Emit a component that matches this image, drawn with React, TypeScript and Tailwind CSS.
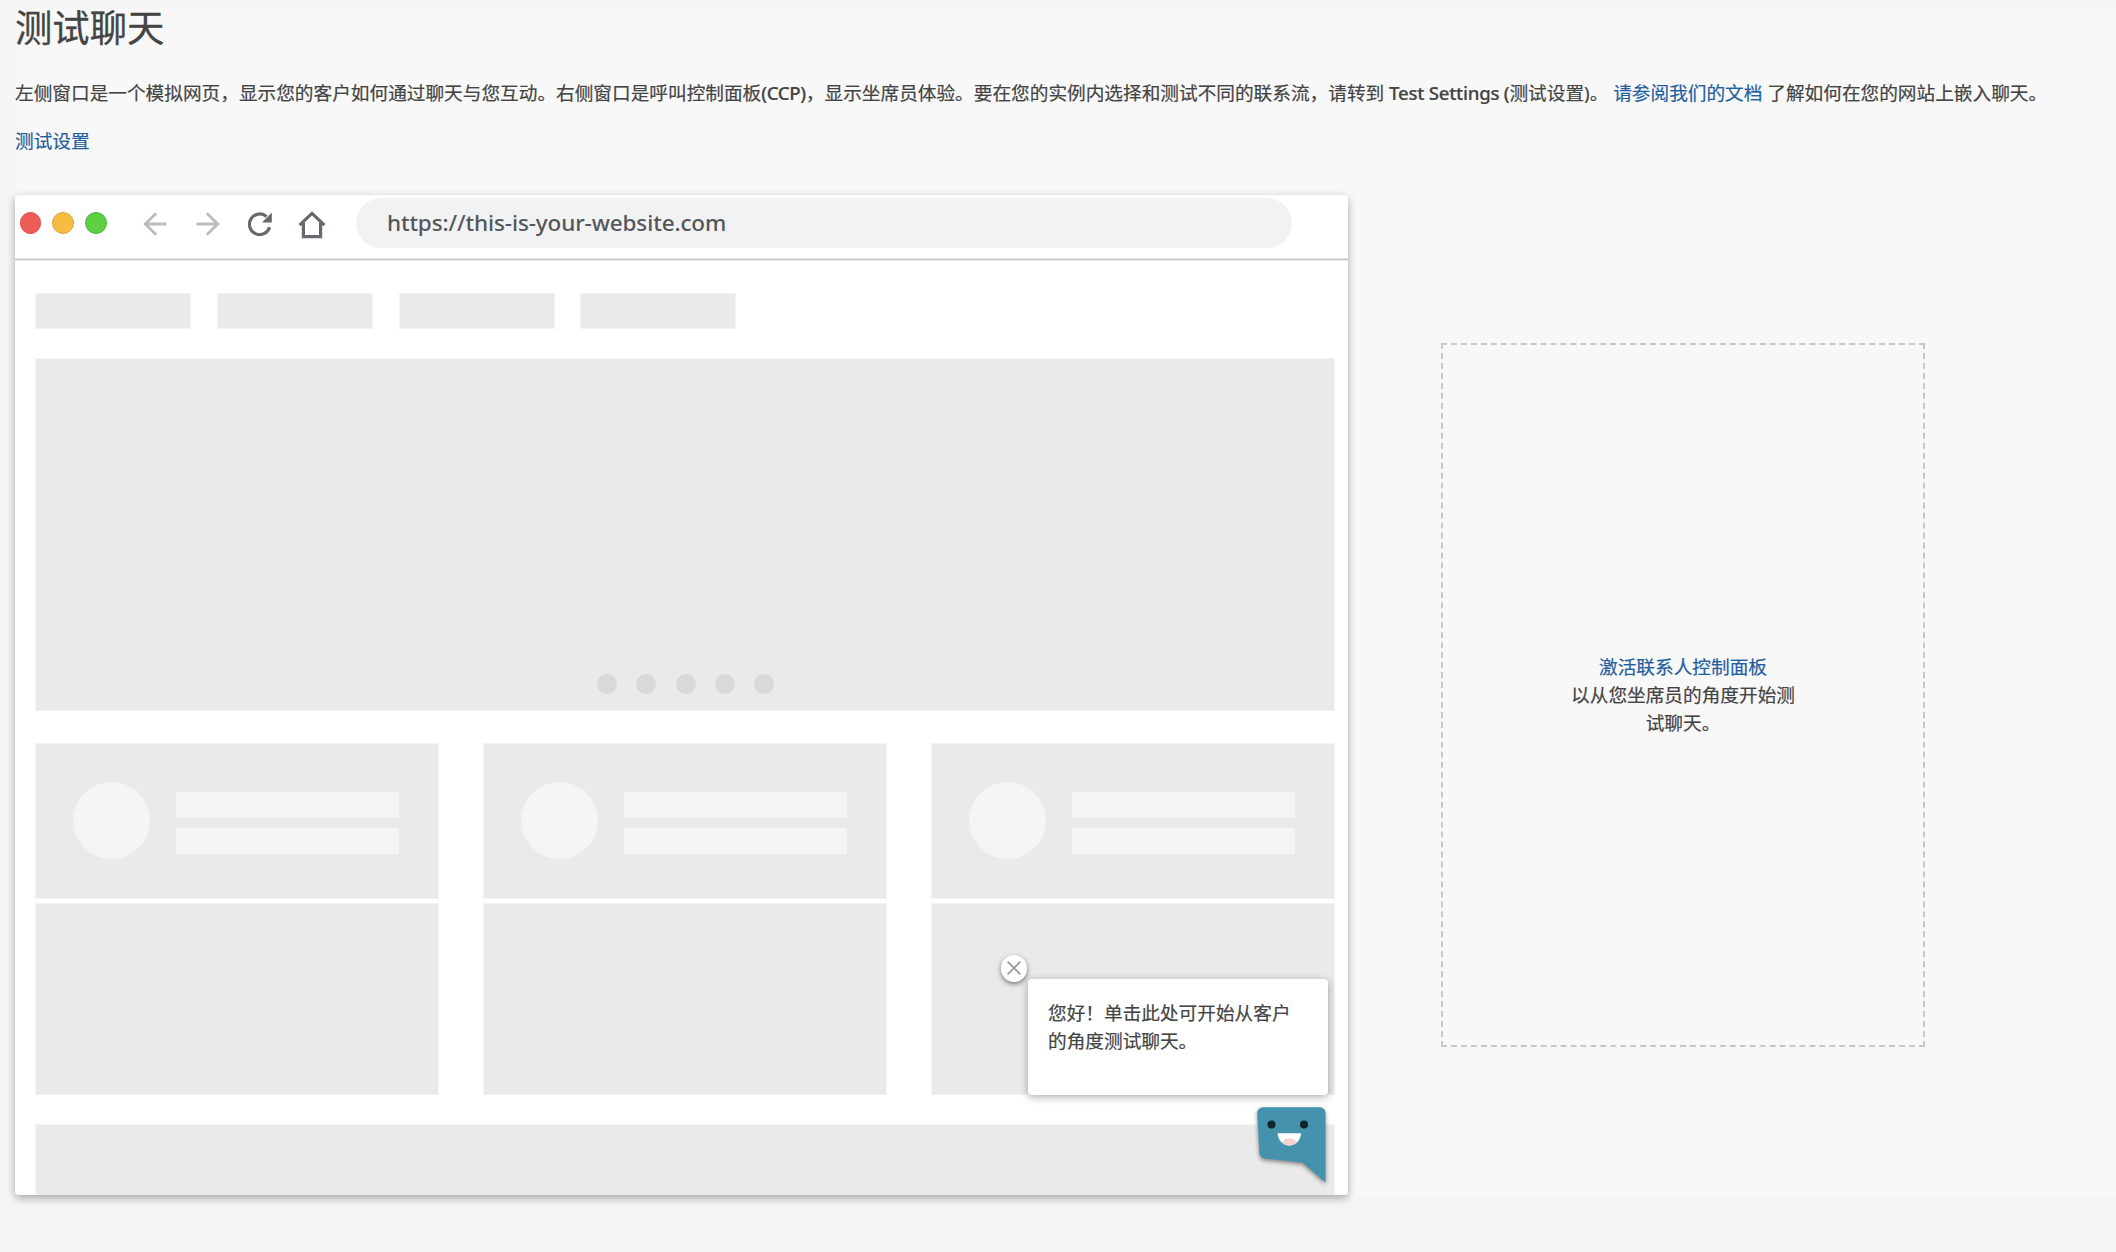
const navItems = [0, 1, 2, 3];
const dots = [0, 1, 2, 3, 4];
const cards = [0, 1, 2];

function BackArrow() {
  return (
    <svg width="24" height="24" viewBox="0 0 24 24" fill="none" stroke="#babcbe" strokeWidth="2.8" className="block">
      <path d="M23.5 12H2.2M13.2 1.2L2.2 12l11 10.8" />
    </svg>
  );
}

function ForwardArrow() {
  return (
    <svg width="24" height="24" viewBox="0 0 24 24" fill="none" stroke="#babcbe" strokeWidth="2.8" className="block">
      <path d="M0.5 12h21.3M10.8 1.2l11 10.8l-11 10.8" />
    </svg>
  );
}

function Reload() {
  return (
    <svg width="24" height="24" viewBox="0 0 24 24" className="block">
      <path d="M21.6 15.2A10.3 10.3 0 1 1 18.6 4.6" fill="none" stroke="#66696e" strokeWidth="3.2" />
      <path d="M23.8 0.6V10.4H14z" fill="#66696e" />
    </svg>
  );
}

function Home() {
  return (
    <svg width="28" height="28" viewBox="0 0 28 28" fill="none" stroke="#66696e" strokeWidth="3.2" className="block">
      <path d="M1.6 14.2L14 2.4l12.4 11.8" />
      <path d="M5.4 11.6V25.6h17.2V11.6" />
    </svg>
  );
}

function ChatFace() {
  return (
    <svg
      width="69"
      height="76"
      viewBox="0 0 69 76"
      className="block drop-shadow-[0_2px_2px_rgba(0,0,0,0.45)]"
    >
      <path
        d="M6 0.3H63a5.5 5.5 0 0 1 5.5 5.5V75.2L45.5 55.4L8 51.6a6 6 0 0 1-5.6-5.8L0.2 6.2A5.8 5.8 0 0 1 6 0.3z"
        fill="#4592ad"
      />
      <circle cx="14.5" cy="17.6" r="4" fill="#13252b" />
      <circle cx="47" cy="17.6" r="4" fill="#13252b" />
      <path d="M20.5 26.2H44.2C43.4 33.6 38.4 38.5 32.3 38.5S21.3 33.6 20.5 26.2z" fill="#fff" />
      <path d="M25.2 35.3C27 32.4 29.4 31.2 32.3 31.2s5.4 1.2 7.2 4.1c-2 2.1-4.400 3.200-7.200 3.200s-5.300-1.100-7.100-3.200z" fill="#f5d0d0" />
    </svg>
  );
}

function Card() {
  return (
    <div className="flex w-[404px] flex-col gap-[4px]">
      <div className="flex h-[156px] items-center border border-[#f3f3f3] bg-[#eaeaea] pl-[37px]">
        <div className="-mt-[1px] h-[77px] w-[77px] shrink-0 rounded-full bg-[#f5f5f5]" />
        <div className="ml-[26.300px] mt-[4px] flex w-[223px] flex-col gap-[9.500px]">
          <div className="h-[26.500px] bg-[#f5f5f5]" />
          <div className="h-[26.500px] bg-[#f5f5f5]" />
        </div>
      </div>
      <div className="h-[192px] border border-[#f3f3f3] bg-[#eaeaea]" />
    </div>
  );
}

function MockBrowser() {
  return (
    <div className="relative h-[1000px] w-[1333px] shrink-0 rounded-[4px] bg-white shadow-[0_3px_8px_rgba(0,0,0,0.33)]">
      <div className="flex h-full flex-col overflow-hidden rounded-[4px]">
        <div className="flex h-[63px] shrink-0 items-start pl-[4.500px]">
          <div className="mt-[17px] flex gap-[11px]">
            <div className="h-[21.800px] w-[21.800px] rounded-full border border-[#e0474f] bg-[#ec5d57]" />
            <div className="h-[21.800px] w-[21.800px] rounded-full border border-[#e3a135] bg-[#f6be41]" />
            <div className="h-[21.800px] w-[21.800px] rounded-full border border-[#43b839] bg-[#5ecf43]" />
          </div>
          <div className="ml-[36.500px] mt-[17px] flex">
            <BackArrow />
            <div className="ml-[29px]"><ForwardArrow /></div>
            <div className="ml-[28px]"><Reload /></div>
            <div className="-mt-[1px] ml-[26px]"><Home /></div>
          </div>
          <div className="ml-[29.500px] mt-[3px] flex h-[49.500px] w-[936px] items-center rounded-full bg-[#f1f2f4] pl-[31px] pt-[1px] text-[22.500px] font-medium tracking-[-0.120px] text-[#55575a]">
            https://this-is-your-website.com
          </div>
        </div>
        <div className="h-[3px] shrink-0 border-y border-[#e6e6e6] bg-[#c6c6c6]" />
        <div className="flex flex-col pl-[20px] pt-[32px]">
          <div className="flex gap-[25.800px]">
            {navItems.map((i) => (
              <div key={i} className="h-[36px] w-[156px] border border-[#f3f3f3] bg-[#eaeaea]" />
            ))}
          </div>
          <div className="mt-[29px] flex h-[353px] w-[1300px] items-end justify-center gap-[19.300px] border border-[#f3f3f3] bg-[#eaeaea] pb-[16px] pl-[1px]">
            {dots.map((i) => (
              <div key={i} className="h-[20px] w-[20px] rounded-full bg-[#d9d9d9]" />
            ))}
          </div>
          <div className="mt-[32px] flex w-[1300px] justify-between">
            {cards.map((i) => (
              <Card key={i} />
            ))}
          </div>
          <div className="mt-[29px] h-[80px] w-[1300px] border border-[#f3f3f3] bg-[#eaeaea]" />
        </div>
      </div>

      <div className="absolute left-[985.500px] top-[760px] flex h-[26.700px] w-[26.700px] items-center justify-center rounded-full bg-white shadow-[0_2px_5px_rgba(0,0,0,0.5)]">
        <svg width="14" height="14" viewBox="0 0 14 14" stroke="#999" strokeWidth="1.600">
          <path d="M0.6 0.6l12.800 12.800M13.400 0.600L0.600 13.400" />
        </svg>
      </div>
      <div className="absolute left-[1013px] top-[784px] h-[116px] w-[300px] rounded-[4px] bg-white px-5 pt-[20px] leading-[28px] shadow-[0_2px_8px_rgba(0,0,0,0.33)] [-webkit-text-stroke:0.200px_currentColor]">
        您好！单击此处可开始从客户
        <br />
        的角度测试聊天。
      </div>
      <div className="absolute left-[1242px] top-[912px]">
        <ChatFace />
      </div>
    </div>
  );
}

export default function App() {
  return (
    <div className="h-[1252px] w-[2116px] overflow-hidden bg-[#f5f5f5] pl-[15px] pt-[9px] font-['Noto_Sans','Noto_Sans_CJK_SC',sans-serif] text-[18.670px] text-[#444]">
      <main className="flex h-[1186px] flex-col bg-[#f8f8f8]">
        <h1 className="-mt-[9px] h-[56px] text-[37.330px] leading-[56px] [-webkit-text-stroke:0.300px_#444]">测试聊天</h1>
        <p className="mt-[23px] whitespace-nowrap leading-[28px] [-webkit-text-stroke:0.200px_currentColor]">
          左侧窗口是一个模拟网页，显示您的客户如何通过聊天与您互动。右侧窗口是呼叫控制面板
          <span className="font-medium tracking-[-0.350px]">(CCP)</span>
          ，显示坐席员体验。要在您的实例内选择和测试不同的联系流，请转到{" "}
          <span className="font-medium tracking-[-0.260px]">Test Settings (</span>测试设置)。{" "}
          <a className="text-[#1f5f9f]">请参阅我们的文档</a> 了解如何在您的网站上嵌入聊天。
        </p>
        <a className="mt-[20px] leading-[28px] text-[#1f5f9f] [-webkit-text-stroke:0.200px_currentColor]">测试设置</a>
        <div className="mt-[40px] flex">
          <MockBrowser />
          <div className="ml-[93px] mt-[148px] flex h-[704px] w-[484px] items-center justify-center border-2 border-dashed border-[#c8c8c8]">
            <div className="w-[232px] text-center leading-[28px] [-webkit-text-stroke:0.200px_currentColor]">
              <a className="text-[#1f5f9f]">激活联系人控制面板</a>
              <br />
              以从您坐席员的角度开始测试聊天。
            </div>
          </div>
        </div>
      </main>
    </div>
  );
}
